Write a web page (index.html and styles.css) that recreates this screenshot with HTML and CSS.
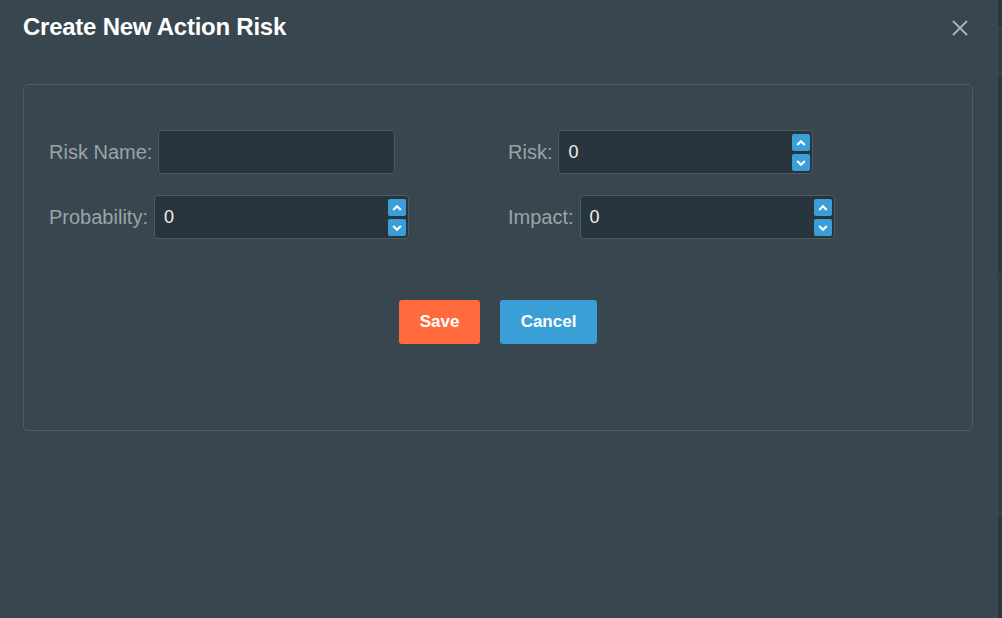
FILE: index.html
```html
<!DOCTYPE html>
<html lang="en">
<head>
<meta charset="utf-8">
<title>Create New Action Risk</title>
<link rel="stylesheet" href="styles.css">
</head>
<body>
<div class="page">
  <div class="modal">
    <div class="modal-header">
      <h1 class="modal-title">Create New Action Risk</h1>
      <button class="close-btn" aria-label="Close">
        <svg width="16" height="16" viewBox="0 0 16 16"><path d="M1.5 1.5 L14.5 14.5 M14.5 1.5 L1.5 14.5" stroke="#aab5bb" stroke-width="1.8" fill="none" stroke-linecap="round"/></svg>
      </button>
    </div>
    <div class="panel">
      <div class="form-grid">
        <div class="field">
          <label class="field-label">Risk Name:</label>
          <div class="input text-input"></div>
        </div>
        <div class="field">
          <label class="field-label">Risk:</label>
          <div class="input num-input"><span class="value">0</span>
            <div class="spin">
              <span class="spin-btn"><svg width="10" height="8" viewBox="0 0 10 8"><path d="M1.2 6 L5 2.2 L8.8 6" stroke="#fff" stroke-width="2.2" fill="none"/></svg></span>
              <span class="spin-btn"><svg width="10" height="8" viewBox="0 0 10 8"><path d="M1.2 2 L5 5.8 L8.8 2" stroke="#fff" stroke-width="2.2" fill="none"/></svg></span>
            </div>
          </div>
        </div>
        <div class="field">
          <label class="field-label">Probability:</label>
          <div class="input num-input"><span class="value">0</span>
            <div class="spin">
              <span class="spin-btn"><svg width="10" height="8" viewBox="0 0 10 8"><path d="M1.2 6 L5 2.2 L8.8 6" stroke="#fff" stroke-width="2.2" fill="none"/></svg></span>
              <span class="spin-btn"><svg width="10" height="8" viewBox="0 0 10 8"><path d="M1.2 2 L5 5.8 L8.8 2" stroke="#fff" stroke-width="2.2" fill="none"/></svg></span>
            </div>
          </div>
        </div>
        <div class="field">
          <label class="field-label">Impact:</label>
          <div class="input num-input"><span class="value">0</span>
            <div class="spin">
              <span class="spin-btn"><svg width="10" height="8" viewBox="0 0 10 8"><path d="M1.2 6 L5 2.2 L8.8 6" stroke="#fff" stroke-width="2.2" fill="none"/></svg></span>
              <span class="spin-btn"><svg width="10" height="8" viewBox="0 0 10 8"><path d="M1.2 2 L5 5.8 L8.8 2" stroke="#fff" stroke-width="2.2" fill="none"/></svg></span>
            </div>
          </div>
        </div>
      </div>
      <div class="actions">
        <button class="btn btn-save">Save</button>
        <button class="btn btn-cancel">Cancel</button>
      </div>
    </div>
  </div>
  <div class="backdrop-strip">
    <div class="strip-seg s1"></div>
    <div class="strip-seg s2"></div>
    <div class="strip-seg s3"></div>
    <div class="strip-seg s4"></div>
  </div>
</div>
</body>
</html>
```

FILE: styles.css
```css
* { box-sizing: border-box; }
html, body {
  margin: 0;
  padding: 0;
  width: 1002px;
  height: 618px;
  overflow: hidden;
  background: #2b373d;
  font-family: "Liberation Sans", Arial, sans-serif;
}
.page {
  display: flex;
  height: 618px;
}
.modal {
  width: 998px;
  height: 618px;
  background: #38474f;
  padding: 0 26px 0 23px;
}
.modal-header {
  display: flex;
  justify-content: space-between;
  align-items: flex-start;
  height: 84px;
}
.modal-title {
  margin: 12px 0 0 0;
  font-size: 24px;
  font-weight: bold;
  letter-spacing: -0.25px;
  color: #ffffff;
  line-height: 30px;
}
.close-btn {
  background: none;
  border: none;
  padding: 0;
  margin: 20px 4px 0 0;
  width: 16px;
  height: 16px;
  display: flex;
}
.panel {
  width: 950px;
  height: 347px;
  border: 1px solid #4c5b64;
  border-radius: 5px;
  padding: 45px 25px 0 25px;
}
.form-grid {
  display: grid;
  grid-template-columns: 459px auto;
  row-gap: 21px;
}
.field {
  display: flex;
  align-items: center;
  gap: 6px;
}
.field-label {
  font-size: 20px;
  color: #9ca3a8;
}
.input {
  position: relative;
  height: 44px;
  background: #29353c;
  border: 1px solid #4d5b63;
  border-radius: 4px;
  display: flex;
  align-items: center;
  padding-left: 9px;
}
.text-input { width: 237px; }
.num-input { width: 255px; }
.value {
  font-size: 18px;
  color: #eef0f1;
}
.spin {
  position: absolute;
  right: 2px;
  top: 3px;
  display: flex;
  flex-direction: column;
  gap: 3px;
}
.spin-btn {
  width: 18px;
  height: 17px;
  background: #3a9fd8;
  border-radius: 2px;
  display: flex;
  align-items: center;
  justify-content: center;
}
.actions {
  display: flex;
  justify-content: center;
  gap: 20px;
  margin-top: 61px;
}
.btn {
  height: 44px;
  border: none;
  border-radius: 3px;
  font-family: "Liberation Sans", Arial, sans-serif;
  font-size: 17px;
  font-weight: bold;
  color: #ffffff;
}
.btn-save { width: 81px; background: #ff6b3d; }
.btn-cancel { width: 97px; background: #3a9fd6; }
.backdrop-strip {
  width: 4px;
  height: 618px;
  display: flex;
  flex-direction: column;
  background: #2b373d;
}
.strip-seg { border-bottom: 1px solid #3f4d55; }
.s1 { height: 29px; }
.s2 { height: 45px; background: #2f3c43; }
.s3 { height: 200px; }
.s4 { height: 240px; background: #2f3c43; }
```
